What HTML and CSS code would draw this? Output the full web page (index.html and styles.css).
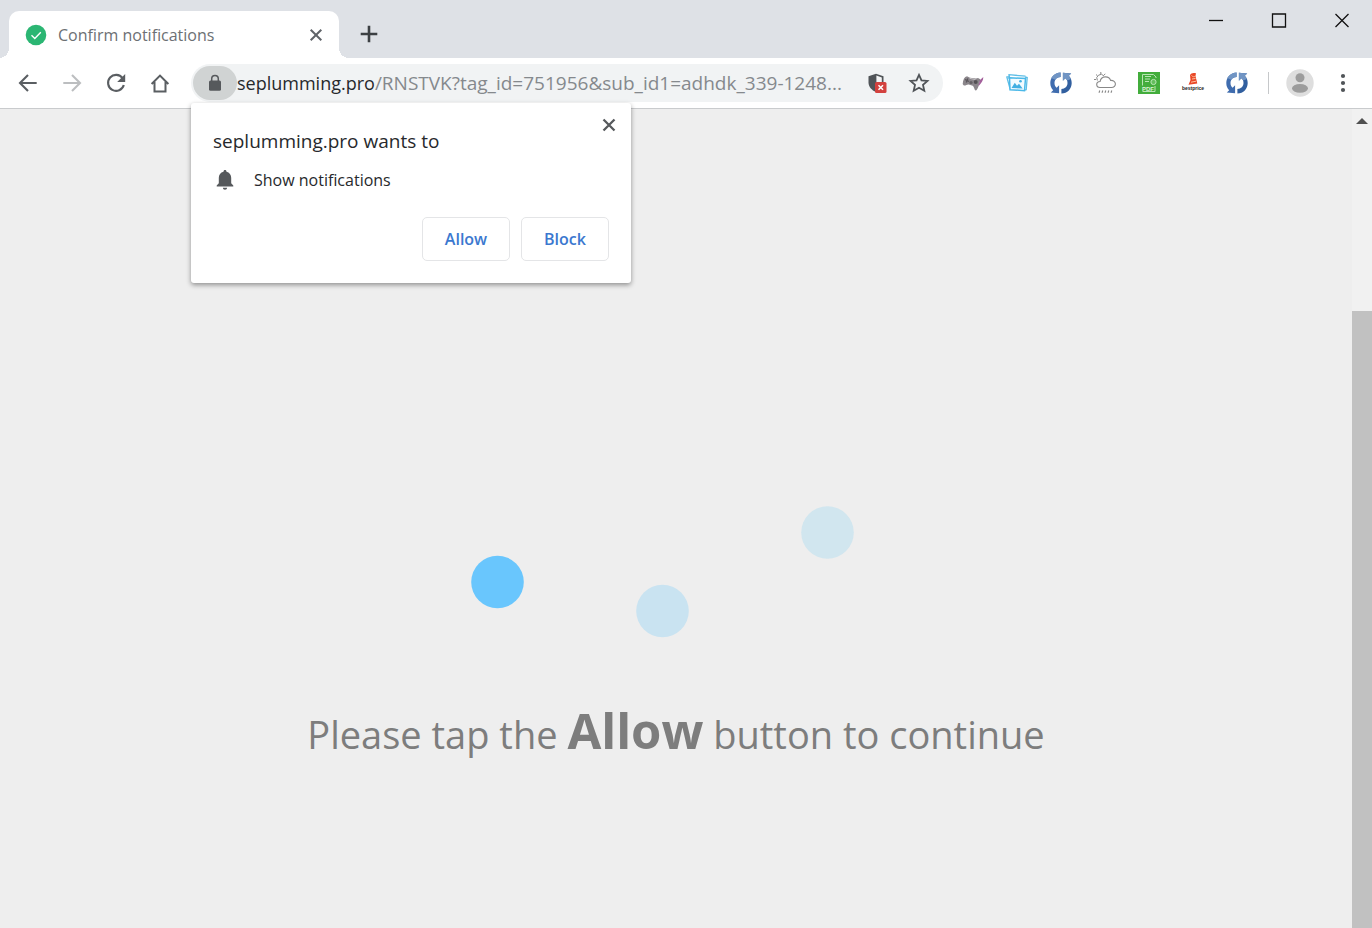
FILE: index.html
```html
<!DOCTYPE html>
<html lang="en">
<head>
<meta charset="utf-8">
<title>Confirm notifications</title>
<link rel="stylesheet" href="styles.css">
</head>
<body>
<div class="window">
  <header class="titlebar">
    <div class="tab">
      <svg class="tab-icon" width="22" height="22" viewBox="0 0 22 22" aria-hidden="true"><circle cx="11" cy="11" r="10.3" fill="#2bb673"/><path d="M6.5 11.2l3.3 3.2 6-6.2" fill="none" stroke="#fff" stroke-width="1.4"/></svg>
      <span class="tab-title">Confirm notifications</span>
      <button class="icon-btn" aria-label="Close tab"><svg width="22" height="22" viewBox="0 0 22 22"><path d="M5.700 5.700l10.600 10.600M16.300 5.700L5.700 16.300" stroke="#5f6368" stroke-width="2"/></svg></button>
    </div>
    <button class="icon-btn new-tab" aria-label="New tab"><svg width="22" height="22" viewBox="0 0 22 22"><path d="M11 2.700v16.600M2.700 11h16.600" stroke="#3c4043" stroke-width="2.600"/></svg></button>
    <div class="window-controls">
      <button class="icon-btn" aria-label="Minimize"><svg width="22" height="22" viewBox="0 0 22 22"><path d="M4 11.500h14" stroke="#111" stroke-width="1.300"/></svg></button>
      <button class="icon-btn" aria-label="Maximize"><svg width="22" height="22" viewBox="0 0 22 22"><path d="M4.500 5h13v13h-13z" fill="none" stroke="#111" stroke-width="1.300"/></svg></button>
      <button class="icon-btn" aria-label="Close"><svg width="22" height="22" viewBox="0 0 22 22"><path d="M4.500 5l13 13M17.500 5l-13 13" stroke="#111" stroke-width="1.300"/></svg></button>
    </div>
  </header>

  <nav class="toolbar">
    <div class="nav-buttons">
      <button class="icon-btn" aria-label="Back"><svg width="22" height="22" viewBox="0 0 22 22"><path d="M19.700 11H3.500M11 3l-8 8 8 8" fill="none" stroke="#5a5e62" stroke-width="2.100"/></svg></button>
      <button class="icon-btn" aria-label="Forward"><svg width="22" height="22" viewBox="0 0 22 22"><path d="M2.300 11h16.200M11 3l8 8-8 8" fill="none" stroke="#bcbec0" stroke-width="2.100"/></svg></button>
      <button class="icon-btn" aria-label="Reload"><svg width="22" height="22" viewBox="0 0 22 22"><path d="M17.600 6.200A8 8 0 1 0 18.800 13" fill="none" stroke="#5a5e62" stroke-width="2.100"/><path d="M20.200 2v8h-8z" fill="#5a5e62"/></svg></button>
      <button class="icon-btn" aria-label="Home"><svg width="22" height="22" viewBox="0 0 22 22"><path d="M2.600 12L11 3.600l8.400 8.400M5.500 10v9.400h11V10" fill="none" stroke="#5a5e62" stroke-width="2"/></svg></button>
    </div>
    <div class="omnibox">
      <button class="site-info" aria-label="View site information"><svg width="14" height="18" viewBox="0 0 14 18"><path d="M3.700 7V4.700a3.300 3.300 0 0 1 6.600 0V7" fill="none" stroke="#56595c" stroke-width="1.500"/><rect x="1" y="6.500" width="12" height="10.200" rx="1.500" fill="#56595c"/></svg></button>
      <div class="address" role="textbox" aria-label="Address" contenteditable="true" spellcheck="false"><span class="host">seplumming.pro</span>/RNSTVK?tag_id=751956&amp;sub_id1=adhdk_339-1248...</div>
      <button class="icon-btn" aria-label="Content blocked"><svg width="22" height="22" viewBox="0 0 22 22"><path d="M10 1.700l7.500 2.600v6c0 4.600-3.200 8-7.500 9.700C5.700 18.300 2.500 15 2.500 10.300v-6z" fill="#505458"/><path d="M10.400 3.600l5.400 1.900V11h-5.400z" fill="#f4f5f6"/><rect x="9" y="10" width="11.500" height="11" rx="1.500" fill="#d3413e"/><path d="M12.500 13.200l4.500 4.500M17 13.200l-4.500 4.500" stroke="#fff" stroke-width="1.500"/></svg></button>
      <button class="icon-btn" aria-label="Bookmark this page"><svg width="22" height="22" viewBox="0 0 22 22"><path d="M11 2.800l2.500 5.500 6 .6-4.500 4 1.300 5.900-5.300-3.100-5.300 3.100L7 12.900l-4.500-4 6-.6z" fill="none" stroke="#505458" stroke-width="1.800"/></svg></button>
    </div>
    <div class="extensions">
      <button class="icon-btn" aria-label="Games"><svg width="22" height="22" viewBox="0 0 22 22"><path d="M.7 12C1 7.500 2.500 4.800 5 4.300L8 5.800l6 .8 2-.6 2.300 1.200c-.5 4-2.600 10.500-4.300 11.300-1.600.4-1.600-3.300-3.300-4.700l-4-1.300C4.500 12 2.400 15.300.7 12z" fill="#8b868b"/><path d="M18 8l3.300-3c.2 3.700-2 6-5 9.500z" fill="#a3609b"/><path d="M3 7.500l4 2M5.800 6.500l-1.500 4" stroke="#5a565b" stroke-width="1.300"/><circle cx="13.700" cy="10" r="2" fill="#545155"/><circle cx="9" cy="10.500" r="1.600" fill="#656165"/><path d="M7.500 6.300l6 1.300" stroke="#c5c2c5"/></svg></button>
      <button class="icon-btn" aria-label="Pictures"><svg width="22" height="22" viewBox="0 0 22 22"><path d="M4 16.500L.8 5 4 4.300M3 7V2.700l16.500 1.500M19 5l2.200.5-1 12.200-1.700.3" fill="none" stroke="#5fbee6" stroke-width="1.300"/><path d="M3.500 5.800l16 .7-1 12.200-14.500-1z" fill="#f2fbff" stroke="#4ab8e8" stroke-width="1.500"/><path d="M5.500 16l3.300-5.300 2.200 3 2-2 3.700 4.800z" fill="#42afe2"/><circle cx="14.500" cy="9.300" r="1.300" fill="#42afe2"/></svg></button>
      <button class="icon-btn" aria-label="Sync"><svg width="22" height="22" viewBox="0 0 22 22"><path d="M10.600.4C4.500.6.3 5.200.3 11c0 3 1 5.500 2.900 7.300L.8 20.500l8.300.8v-8l-2.500 2.400C5.200 14.600 4.500 13 4.500 11c0-3.500 2.300-5.600 6.100-6z" fill="#3f6cae"/><path d="M11.400 21.600c6.100-.2 10.300-4.800 10.300-10.600 0-3-1-5.500-2.900-7.300l2.400-2.200-8.300-.8v8l2.500-2.400c1.400 1.100 2.100 2.700 2.100 4.700 0 3.500-2.300 5.600-6.100 6z" fill="#315f9f"/><path d="M10.600.4C6.500.6 3 3 1.300 6l3.900 1.700C6.300 6 8 5.200 10.600 5zM12.900.7l8.300.8-2.400 2.200L21 7l-3.500 1.500-2.100-2.200-2.500 2.400z" fill="#7195c4"/></svg></button>
      <button class="icon-btn" aria-label="Weather"><svg width="22" height="22" viewBox="0 0 22 22"><path d="M3.400 8.500A4 4 0 0 1 10 4M6.800 0v2M2 2.500l1.500 1.400M0 7.500h2M11.200 1.800L10 3.200" fill="none" stroke="#888" stroke-width="1"/><path d="M6 15.500c-4.300 0-4.500-6 .1-6C7 3.600 15 3.500 16.600 8.400c6.200-.4 6.300 7.100.8 7.100z" fill="#fff" stroke="#888" stroke-width="1.100"/><path d="M5.800 18.500L5 20.700M8.800 18.500L8 20.700M11.800 18.500l-.8 2.200M14.800 18.500l-.8 2.200M17.800 18.500l-.8 2.200" stroke="#888" stroke-width="1.100"/></svg></button>
      <button class="icon-btn" aria-label="PDF"><svg width="22" height="22" viewBox="0 0 22 22"><path fill="#43ad3c" d="M0 0h22v22H0z"/><path d="M4.500 13.500V2.500h11L18 5v1M4.500 19.500H17V14" fill="none" stroke="#b9e5b4" stroke-width="1"/><path d="M7 4.500h6M7 7h5M7 9.500h4" stroke="#b9e5b4" stroke-width="1"/><circle cx="15.500" cy="10" r="2.600" fill="#64bd5e" stroke="#b9e5b4"/><text class="pdf-text" x="4" y="18.500">PDF</text></svg></button>
      <button class="icon-btn" aria-label="Bestprice"><svg class="spill" width="22" height="22" viewBox="0 0 22 22"><path d="M8 3c1-2 3-2.500 6-1.800L13.500 4l1.800 7.500-8.800 1.200L8.500 8z" fill="#e94827"/><path d="M9.500 3.500c1.500 1.500 2.500 1.500 4 .6M10 7l3.500-.5M9 10.200l5-1" fill="none" stroke="#ffc09d" stroke-width="1"/><text class="bp-text" x="11" y="18" text-anchor="middle">bestprice</text></svg></button>
      <button class="icon-btn" aria-label="Sync 2"><svg width="22" height="22" viewBox="0 0 22 22"><path d="M10.600.4C4.500.6.3 5.200.3 11c0 3 1 5.500 2.900 7.300L.8 20.500l8.300.8v-8l-2.500 2.400C5.200 14.600 4.500 13 4.500 11c0-3.500 2.300-5.600 6.100-6z" fill="#3f6cae"/><path d="M11.400 21.600c6.100-.2 10.300-4.800 10.300-10.600 0-3-1-5.500-2.900-7.300l2.400-2.200-8.300-.8v8l2.500-2.400c1.400 1.100 2.100 2.700 2.100 4.700 0 3.500-2.300 5.600-6.100 6z" fill="#315f9f"/><path d="M10.600.4C6.500.6 3 3 1.300 6l3.900 1.700C6.300 6 8 5.200 10.600 5zM12.900.7l8.300.8-2.400 2.200L21 7l-3.500 1.500-2.100-2.200-2.500 2.400z" fill="#7195c4"/></svg></button>
    </div>
    <div class="divider"></div>
    <button class="icon-btn avatar" aria-label="Profile"><svg width="28" height="28" viewBox="0 0 28 28"><circle cx="14" cy="14" r="13.700" fill="#dedede"/><circle cx="14" cy="8.700" r="4.500" fill="#9c9c9c"/><ellipse cx="14" cy="19.300" rx="8" ry="4.400" fill="#9c9c9c"/></svg></button>
    <button class="icon-btn menu" aria-label="Menu"><svg width="22" height="22" viewBox="0 0 22 22" fill="#505458"><circle cx="11" cy="4" r="2.100"/><circle cx="11" cy="11" r="2.100"/><circle cx="11" cy="18" r="2.100"/></svg></button>

    <section class="permission" role="dialog" aria-labelledby="perm-title">
      <button class="icon-btn permission-close" aria-label="Dismiss"><svg width="22" height="22" viewBox="0 0 22 22"><path d="M5.500 5.500l11 11M16.500 5.500l-11 11" stroke="#56595c" stroke-width="2.300"/></svg></button>
      <h2 class="permission-title" id="perm-title">seplumming.pro wants to</h2>
      <p class="permission-row"><svg width="18" height="22" viewBox="0 0 18 22" aria-hidden="true"><path d="M9 1c.9 0 1.500.7 1.500 1.700 3 .7 4.700 3 4.700 6.100v5.500l2.100 2.200v1H.7v-1l2.100-2.200V8.800c0-3.100 1.700-5.400 4.700-6.100C7.500 1.700 8.100 1 9 1zM6.900 18.700h4.200c0 1.200-.9 2-2.100 2s-2.100-.8-2.100-2z" fill="#56595c"/></svg><span>Show notifications</span></p>
      <div class="permission-actions">
        <button class="action">Allow</button>
        <button class="action">Block</button>
      </div>
    </section>
  </nav>

  <div class="viewport">
    <main class="page">
      <svg class="loader" width="410" height="134" viewBox="0 0 410 134" aria-hidden="true"><circle cx="26.500" cy="77" r="26.300" fill="#69c6fd"/><circle cx="191.500" cy="106" r="26.300" fill="#c9e3f1"/><circle cx="356.500" cy="27.500" r="26.300" fill="#d1e6ef"/></svg>
      <p class="message">Please tap the <strong>Allow</strong> button to continue</p>
    </main>
    <div class="scrollbar">
      <button class="scroll-up" aria-label="Scroll up"><svg width="12" height="6" viewBox="0 0 12 6"><path d="M0 6L6 0l6 6z" fill="#505050"/></svg></button>
      <div class="thumb"></div>
    </div>
  </div>
</div>
</body>
</html>
```
FILE: styles.css
```css
* { box-sizing: border-box; }
body { margin: 0; font-family: "Open Sans", "Noto Sans", sans-serif; color: #27292c; }
.window { display: flex; flex-direction: column; min-height: 100vh; background: #eee; }
button { font: inherit; cursor: pointer; }
svg { display: block; }
.spill { overflow: visible; }
.icon-btn { display: flex; flex: none; padding: 0; border: 0; background: none; }

.titlebar { display: flex; align-items: flex-start; height: 58px; padding: 11px 11px 0 9px; background: #dee1e6; }
.tab { position: relative; display: flex; align-items: center; gap: 11px; width: 330px; height: 47px; padding: 0 12px 0 16px; background: #fff; border-radius: 10px 10px 0 0; }
.tab::before, .tab::after { content: ""; position: absolute; bottom: 0; width: 10px; height: 10px; }
.tab::before { right: 100%; background: radial-gradient(circle at 0 0, transparent 10px, #fff 10px); }
.tab::after { left: 100%; background: radial-gradient(circle at 100% 0, transparent 10px, #fff 10px); }
.tab-title { flex: 1; font-size: 16px; line-height: 22px; color: #6c7074; white-space: nowrap; }
.new-tab { margin: 12px 0 0 19px; }
.window-controls { display: flex; gap: 41px; margin: -2px 8px 0 auto; }

.toolbar { position: relative; display: flex; align-items: center; height: 51px; padding: 0 18px 0 17px; background: #fff; border-bottom: 1px solid #c9cbcd; }
.nav-buttons { display: flex; gap: 22px; margin-right: 20px; }
.omnibox { display: flex; flex: 1; align-items: center; min-width: 0; height: 38px; padding: 0 13px 0 2px; background: #f1f3f4; border-radius: 19px; }
.site-info { display: grid; place-items: center; flex: none; width: 44px; height: 34px; padding: 0; border: 0; border-radius: 17px; background: #d0d3d3; }
.address { flex: 1; min-width: 0; overflow: hidden; font-size: 19px; line-height: 26px; color: #85898d; white-space: nowrap; outline: 0; }
.host { font-size: 18px; color: #27292c; }
.omnibox .icon-btn { margin-left: 20px; }
.extensions { display: flex; gap: 22px; margin-left: 19px; }
.divider { width: 1px; height: 22px; margin: 0 17px 0 20px; background: #c6c8ca; }
.menu { margin-left: 18px; }
.pdf-text { font: bold 6px "Liberation Sans", sans-serif; fill: #d9f3d6; }
.bp-text { font: bold 5px "Liberation Sans", sans-serif; fill: #222; }

.permission { position: absolute; z-index: 1; top: 45px; left: 191px; width: 440px; padding: 24px 22px 22px; background: #fff; border-radius: 3px; box-shadow: 0 2px 5px rgba(0, 0, 0, .4); }
.permission-close { position: absolute; top: 11px; right: 11px; }
.permission-title { margin: 0; font-size: 19px; font-weight: 400; line-height: 28px; }
.permission-row { display: flex; align-items: center; gap: 20px; margin: 14px 0 26px; padding-left: 3px; font-size: 16px; line-height: 22px; }
.permission-actions { display: flex; justify-content: flex-end; gap: 11px; }
.action { width: 88px; height: 44px; border: 1px solid #e4e5e7; border-radius: 5px; background: #fff; color: #3b78cf; font-size: 16px; font-weight: 600; }

.viewport { display: flex; flex: 1; }
.page { display: flex; flex: 1; flex-direction: column; align-items: center; padding-top: 396px; }
.message { margin: 56px 0 0; font-size: 38px; line-height: 70px; color: #7d7d7d; }
.message strong { font-size: 49px; font-weight: 700; }
.scrollbar { display: flex; flex-direction: column; width: 20px; background: #f1f1f1; }
.scroll-up { display: grid; place-items: center; height: 24px; margin-bottom: 178px; padding: 0; border: 0; background: none; }
.thumb { flex: 1; background: #c1c1c1; }
```
